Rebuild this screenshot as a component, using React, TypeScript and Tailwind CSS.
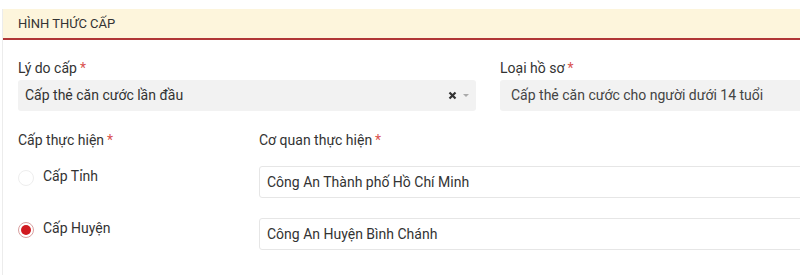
import React from "react";

const Star = () => <span className="text-[#d9534f] ml-[3px]">*</span>;

export default function App() {
  return (
    <div className="w-[800px] h-[275px] overflow-hidden bg-white pl-[2px] pt-[9px] font-['Roboto',sans-serif] text-[#333]">
      <div className="w-[900px] h-full border-l border-[#ececec]">
        <div className="h-[31px] bg-[#fdf5dc] border-b-2 border-[#b03636] pl-[15px] flex items-center text-[13px] text-[#333]">
          HÌNH THỨC CẤP
        </div>
        <div className="pl-[15px] pt-[18px]">
          <div className="flex gap-[24px]">
            <div className="w-[458px]">
              <div className="text-[14px] leading-[20px] h-[20px]">Lý do cấp<Star /></div>
              <div className="mt-[2px] h-[31px] bg-[#f2f2f2] rounded-[3px] flex items-center pl-[7px] pr-[6px] text-[14px]">
                <span className="flex-1">Cấp thẻ căn cước lần đầu</span>
                <svg width="9" height="9" viewBox="0 0 9 9">
                  <path d="M1.5 1.5 L7.5 7.5 M7.5 1.5 L1.5 7.5" stroke="#333" strokeWidth="2.2" />
                </svg>
                <svg width="8" height="5" viewBox="0 0 8 5" className="ml-[5px]">
                  <path d="M1 1 L4 4 L7 1 Z" fill="#aaa" />
                </svg>
              </div>
            </div>
            <div className="w-[400px]">
              <div className="text-[14px] leading-[20px] h-[20px]">Loại hồ sơ<Star /></div>
              <div className="mt-[2px] h-[31px] bg-[#f2f2f2] rounded-[3px] flex items-center pl-[11px] text-[14px] text-[#444]">
                Cấp thẻ căn cước cho người dưới 14 tuổi
              </div>
            </div>
          </div>
          <div className="flex mt-[19px]">
            <div className="w-[241px]">
              <div className="text-[14px] leading-[20px] h-[20px]">Cấp thực hiện<Star /></div>
              <div className="mt-[12px] h-[32px] flex items-center gap-[9px]">
                <span className="w-[16px] h-[16px] rounded-full border border-[#eee] bg-white" />
                <span className="text-[14px] -translate-y-[2px]">Cấp Tỉnh</span>
              </div>
              <div className="mt-[20px] h-[32px] flex items-center gap-[9px]">
                <span className="w-[16px] h-[16px] rounded-full border border-[#d9a0a0] bg-white flex items-center justify-center">
                  <span className="w-[10px] h-[10px] rounded-full bg-[#d0191f]" />
                </span>
                <span className="text-[14px] -translate-y-[2px]">Cấp Huyện</span>
              </div>
            </div>
            <div className="flex-1">
              <div className="text-[14px] leading-[20px] h-[20px]">Cơ quan thực hiện<Star /></div>
              <div className="mt-[16px] h-[32px] border border-[#e6e6e6] rounded-[3px] flex items-center pl-[7px] text-[14px]">
                Công An Thành phố Hồ Chí Minh
              </div>
              <div className="mt-[20px] h-[32px] border border-[#e6e6e6] rounded-[3px] flex items-center pl-[7px] text-[14px]">
                Công An Huyện Bình Chánh
              </div>
            </div>
          </div>
        </div>
      </div>
    </div>
  );
}
